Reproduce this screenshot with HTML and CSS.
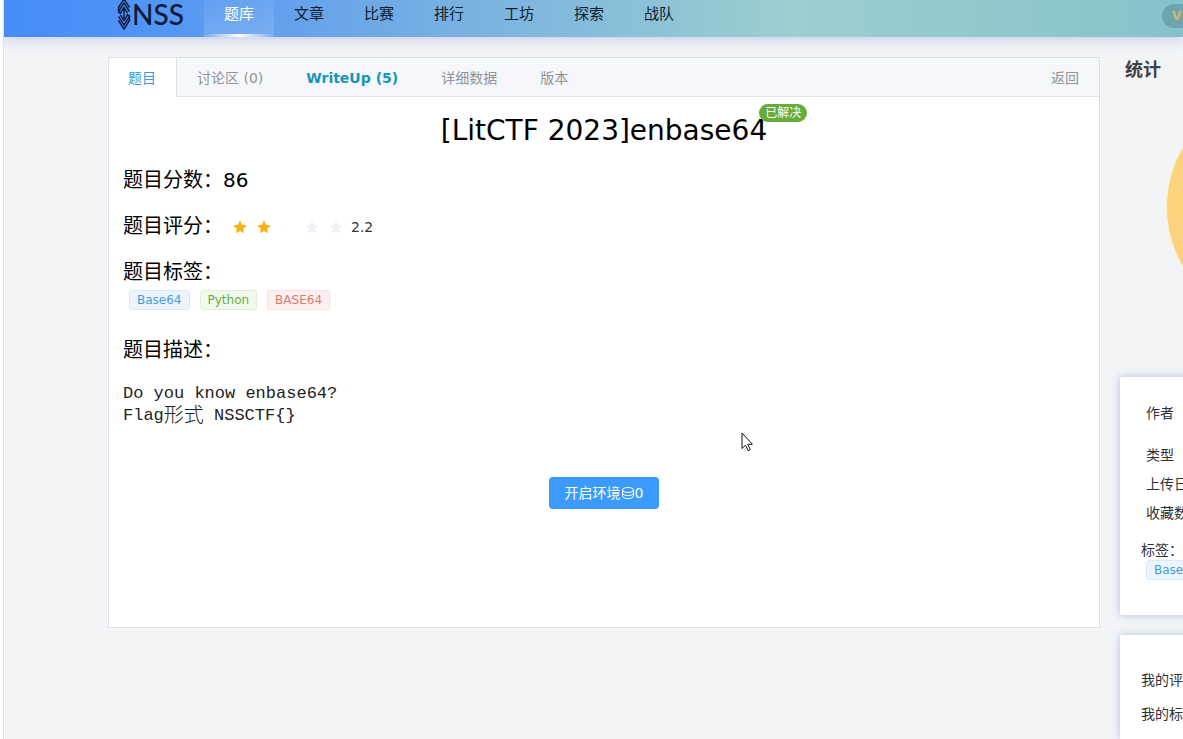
FILE: index.html
```html
<!DOCTYPE html>
<html lang="zh-CN">
<head>
<meta charset="utf-8">
<title>[LitCTF 2023]enbase64 - NSS</title>
<link rel="stylesheet" href="styles.css">
</head>
<body>
<div class="page">
  <header class="topbar">
    <a class="logo" href="#">
      <svg class="logo-mark" viewBox="0 0 14 32" aria-hidden="true">
        <g fill="none" stroke="#0b1a3a" stroke-width="1.400">
          <path d="M1.500 9.500 7 1l5.500 8.500M1.500 13.500 7 5l5.500 8.500M3.500 15 7 9.500l3.500 5.500M7 9.500v13"/>
          <path d="M1.500 22.500 7 31l5.500-8.500M1.500 18.500 7 27l5.500-8.500M3.500 17 7 22.500l3.500-5.500"/>
          <path d="M1.500 9v5l2.500 2M12.500 23v-5L10 16"/>
        </g>
      </svg>
      <span class="logo-text">NSS</span>
    </a>
    <nav class="nav">
      <a class="nav-item nav-active" href="#">题库</a>
      <a class="nav-item" href="#">文章</a>
      <a class="nav-item" href="#">比赛</a>
      <a class="nav-item" href="#">排行</a>
      <a class="nav-item" href="#">工坊</a>
      <a class="nav-item" href="#">探索</a>
      <a class="nav-item" href="#">战队</a>
    </nav>
    <a class="vip" href="#">VIP</a>
  </header>

  <div class="content">
    <main class="panel">
      <div class="tabs">
        <button class="tab tab-active" type="button">题目</button>
        <button class="tab" type="button">讨论区 (0)</button>
        <button class="tab tab-writeup" type="button">WriteUp (5)</button>
        <button class="tab" type="button">详细数据</button>
        <button class="tab" type="button">版本</button>
        <button class="tab tab-back" type="button">返回</button>
      </div>
      <div class="problem">
        <h1 class="title"><span class="title-text">[LitCTF 2023]enbase64<span class="solved">已解决</span></span></h1>
        <div class="row">题目分数：<span>86</span></div>
        <div class="row">题目评分：
          <span class="rate">
            <svg class="star" viewBox="0 0 24 24"><path d="m12 1 3.400 7.300 8 1-5.900 5.500 1.500 7.900-7-3.900-7 3.900 1.500-7.900L.6 9.300l8-1z"/></svg>
            <svg class="star" viewBox="0 0 24 24"><path d="m12 1 3.400 7.300 8 1-5.900 5.500 1.500 7.900-7-3.900-7 3.900 1.500-7.900L.6 9.300l8-1z"/></svg>
            <svg class="star" viewBox="0 0 24 24"><path class="star-part" d="M.6 9.300 3 9v2.400z"/></svg>
            <svg class="star star-off" viewBox="0 0 24 24"><path d="m12 1 3.400 7.300 8 1-5.900 5.500 1.500 7.900-7-3.900-7 3.900 1.500-7.900L.6 9.300l8-1z"/></svg>
            <svg class="star star-off" viewBox="0 0 24 24"><path d="m12 1 3.400 7.300 8 1-5.900 5.500 1.500 7.900-7-3.900-7 3.900 1.500-7.900L.6 9.300l8-1z"/></svg>
            <span class="rate-value">2.2</span>
          </span>
        </div>
        <div class="row">题目标签：</div>
        <div class="tags">
          <span class="tag tag-blue">Base64</span>
          <span class="tag tag-green">Python</span>
          <span class="tag tag-red">BASE64</span>
        </div>
        <div class="row row-desc">题目描述：</div>
        <div class="desc">
          <p>Do you know enbase64?</p>
          <p>Flag<span class="desc-cjk">形式</span> NSSCTF{}</p>
        </div>
        <button class="start" type="button">开启环境<svg class="coins" viewBox="0 0 14 14" aria-hidden="true"><g fill="none" stroke="currentColor"><ellipse cx="7" cy="4" rx="5.500" ry="2.500"/><path d="M1.500 4v6c0 3.400 11 3.400 11 0V4M1.500 7c0 3.400 11 3.400 11 0"/></g></svg>0</button>
      </div>
    </main>

    <aside class="side">
      <section class="stats">
        <h2 class="stats-title">统计</h2>
        <div class="pie"></div>
      </section>
      <section class="card info">
        <div class="info-list">
          <div class="info-author">作者</div>
          <div>类型</div>
          <div>上传日期</div>
          <div>收藏数</div>
        </div>
        <div class="info-label">标签：</div>
        <span class="tag tag-blue info-tag">Base64</span>
      </section>
      <section class="card mine">
        <div>我的评分</div>
        <div>我的标签</div>
      </section>
    </aside>
  </div>
  <svg class="cursor" viewBox="0 0 12 20" aria-hidden="true"><path d="M1 1v15.500l3.500-3.300 2.600 5.500 2.200-1-2.600-5.400h4.700z" fill="#fff" stroke="#111"/></svg>
</div>
</body>
</html>
```
FILE: styles.css
```css
* { box-sizing: border-box; }

body {
  margin: 0;
  background: #fff;
  color: #000;
  font-family: "DejaVu Sans", "Noto Sans CJK SC", sans-serif;
  font-size: 14px;
}

h1, h2, p { margin: 0; font-weight: normal; }
a { color: inherit; text-decoration: none; }
button { font: inherit; border: 0; cursor: pointer; }

.page {
  position: relative;
  min-height: 100vh;
  margin-left: 3px;
  border-left: 1px solid #dfe1e6;
  background: #f2f4f6;
  overflow: hidden;
}

.topbar {
  display: flex;
  height: 37px;
  padding-left: 113px;
  background: linear-gradient(90deg, #478df8 0%, #4f93f6 11%, #71abe5 33%, #9ccfcf 67%, #86c2cb 100%);
  box-shadow: 0 2px 14px #c3c9e8;
}

.logo {
  display: flex;
  gap: 1px;
  width: 87px;
  height: 28px;
  align-items: center;
  color: #0b1a3a;
}
.logo-mark { width: 14px; height: 32px; flex: none; }
.logo-text { font: 500 28px/28px Lato, sans-serif; }

.nav { display: flex; }
.nav-item {
  width: 70px;
  height: 37px;
  font-size: 15px;
  line-height: 28px;
  text-align: center;
  color: #101c30;
}
.nav-active {
  color: #fff;
  background:
    linear-gradient(90deg, transparent, #fff, transparent) bottom / 100% 3px no-repeat,
    linear-gradient(#ffffff10, #ffffff28);
}

.vip {
  width: 60px;
  height: 24px;
  margin: 4px -39px 0 auto;
  padding-left: 10px;
  border-radius: 12px;
  background: #6ea4ae;
  color: #d0ba73;
  font: bold 12px/24px "DejaVu Sans", sans-serif;
}

.content {
  display: grid;
  grid-template-columns: minmax(0, 1fr) 63px;
  column-gap: 20px;
  align-items: start;
  padding: 20px 0 0 104px;
}

.panel {
  min-height: 571px;
  border: 1px solid #dcdfe6;
  background: #fff;
}

.tabs {
  display: flex;
  gap: 3px;
  height: 39px;
  background: #f5f7fa;
  border-bottom: 1px solid #dfe2ea;
}
.tab {
  height: 39px;
  padding: 1px 20px 0;
  background: none;
  color: #909399;
  line-height: 38px;
}
.tab-active {
  margin-right: -3px;
  padding-left: 19px;
  background: #fff;
  border-right: 1px solid #dcdfe6;
  color: #409ad8;
}
.tab-writeup { color: #1596b8; font-weight: bold; }
.tab-back { margin-left: auto; }

.problem {
  display: flex;
  flex-direction: column;
  padding: 16px 14px 14px;
}

.title { text-align: center; font-size: 28px; line-height: 36px; }
.title-text { position: relative; }
.solved {
  position: absolute;
  left: 100%;
  top: -10px;
  margin-left: -8px;
  padding: 0 6px;
  border-radius: 9px;
  background: #67ac3a;
  color: #fff;
  font-size: 12px;
  line-height: 18px;
  white-space: nowrap;
}

.row {
  display: flex;
  align-items: center;
  height: 26px;
  margin-top: 20px;
  font-size: 20px;
  line-height: 26px;
}
.title + .row { margin-top: 18px; }
.rate { display: flex; align-items: center; gap: 10px; padding: 2px 0 0 10px; }
.star { width: 14px; height: 14px; fill: #fcb012; }
.star-off { fill: #eff2f7; }
.star-part { fill: #f3e6cc; }
.rate-value { margin-left: -2px; font-size: 14px; color: #333; }

.tags { display: flex; gap: 10px; padding: 5px 0 0 6px; }
.tag {
  height: 20px;
  padding: 0 7px;
  border: 1px solid;
  border-radius: 3px;
  font-size: 12px;
  line-height: 18px;
}
.tag-blue { color: #459bdc; background: #ecf5ff; border-color: #d6eafb; }
.tag-green { color: #67b045; background: #f0f9eb; border-color: #dff0d6; }
.tag-red { color: #e07870; background: #fef0f0; border-color: #fbe0e0; }

.row-desc { margin-top: 27px; }
.desc {
  margin-top: 20px;
  font-family: "Liberation Mono", "Noto Sans CJK SC", monospace;
  font-size: 17px;
  line-height: 22px;
  color: #222;
}
.desc-cjk {
  font-size: 20px;
  font-weight: 300;
  line-height: 22px;
  vertical-align: -2px;
}

.start {
  display: flex;
  align-items: center;
  align-self: center;
  height: 32px;
  margin-top: 49px;
  padding: 0 16px;
  border-radius: 4px;
  background: #3a9bfc;
  color: #fff;
  line-height: 20px;
}
.coins { width: 14px; height: 14px; }

.side { min-width: 0; white-space: nowrap; }
.stats { height: 300px; padding: 0 0 0 5px; }
.stats-title { font-size: 18px; line-height: 26px; font-weight: bold; color: #404244; }
.pie {
  width: 236px;
  height: 236px;
  margin: 6px 0 0 41px;
  border: 1px solid #fff3c8;
  border-radius: 50%;
  background: #fcd27c;
}

.card {
  width: 320px;
  margin-top: 20px;
  background: #fff;
  box-shadow: 0 0 8px #b4bede;
  color: #303133;
}
.info { height: 238px; padding: 22px 21px; }
.info-list { padding-left: 5px; line-height: 29px; }
.info-author { margin-bottom: 13px; }
.info-label { margin-top: 12px; line-height: 20px; }
.info-tag { display: inline-block; margin-left: 5px; }
.mine { padding: 28px 21px 8px; line-height: 34px; }

.cursor {
  position: absolute;
  left: 737px;
  top: 432px;
  width: 12px;
  height: 20px;
}
```
